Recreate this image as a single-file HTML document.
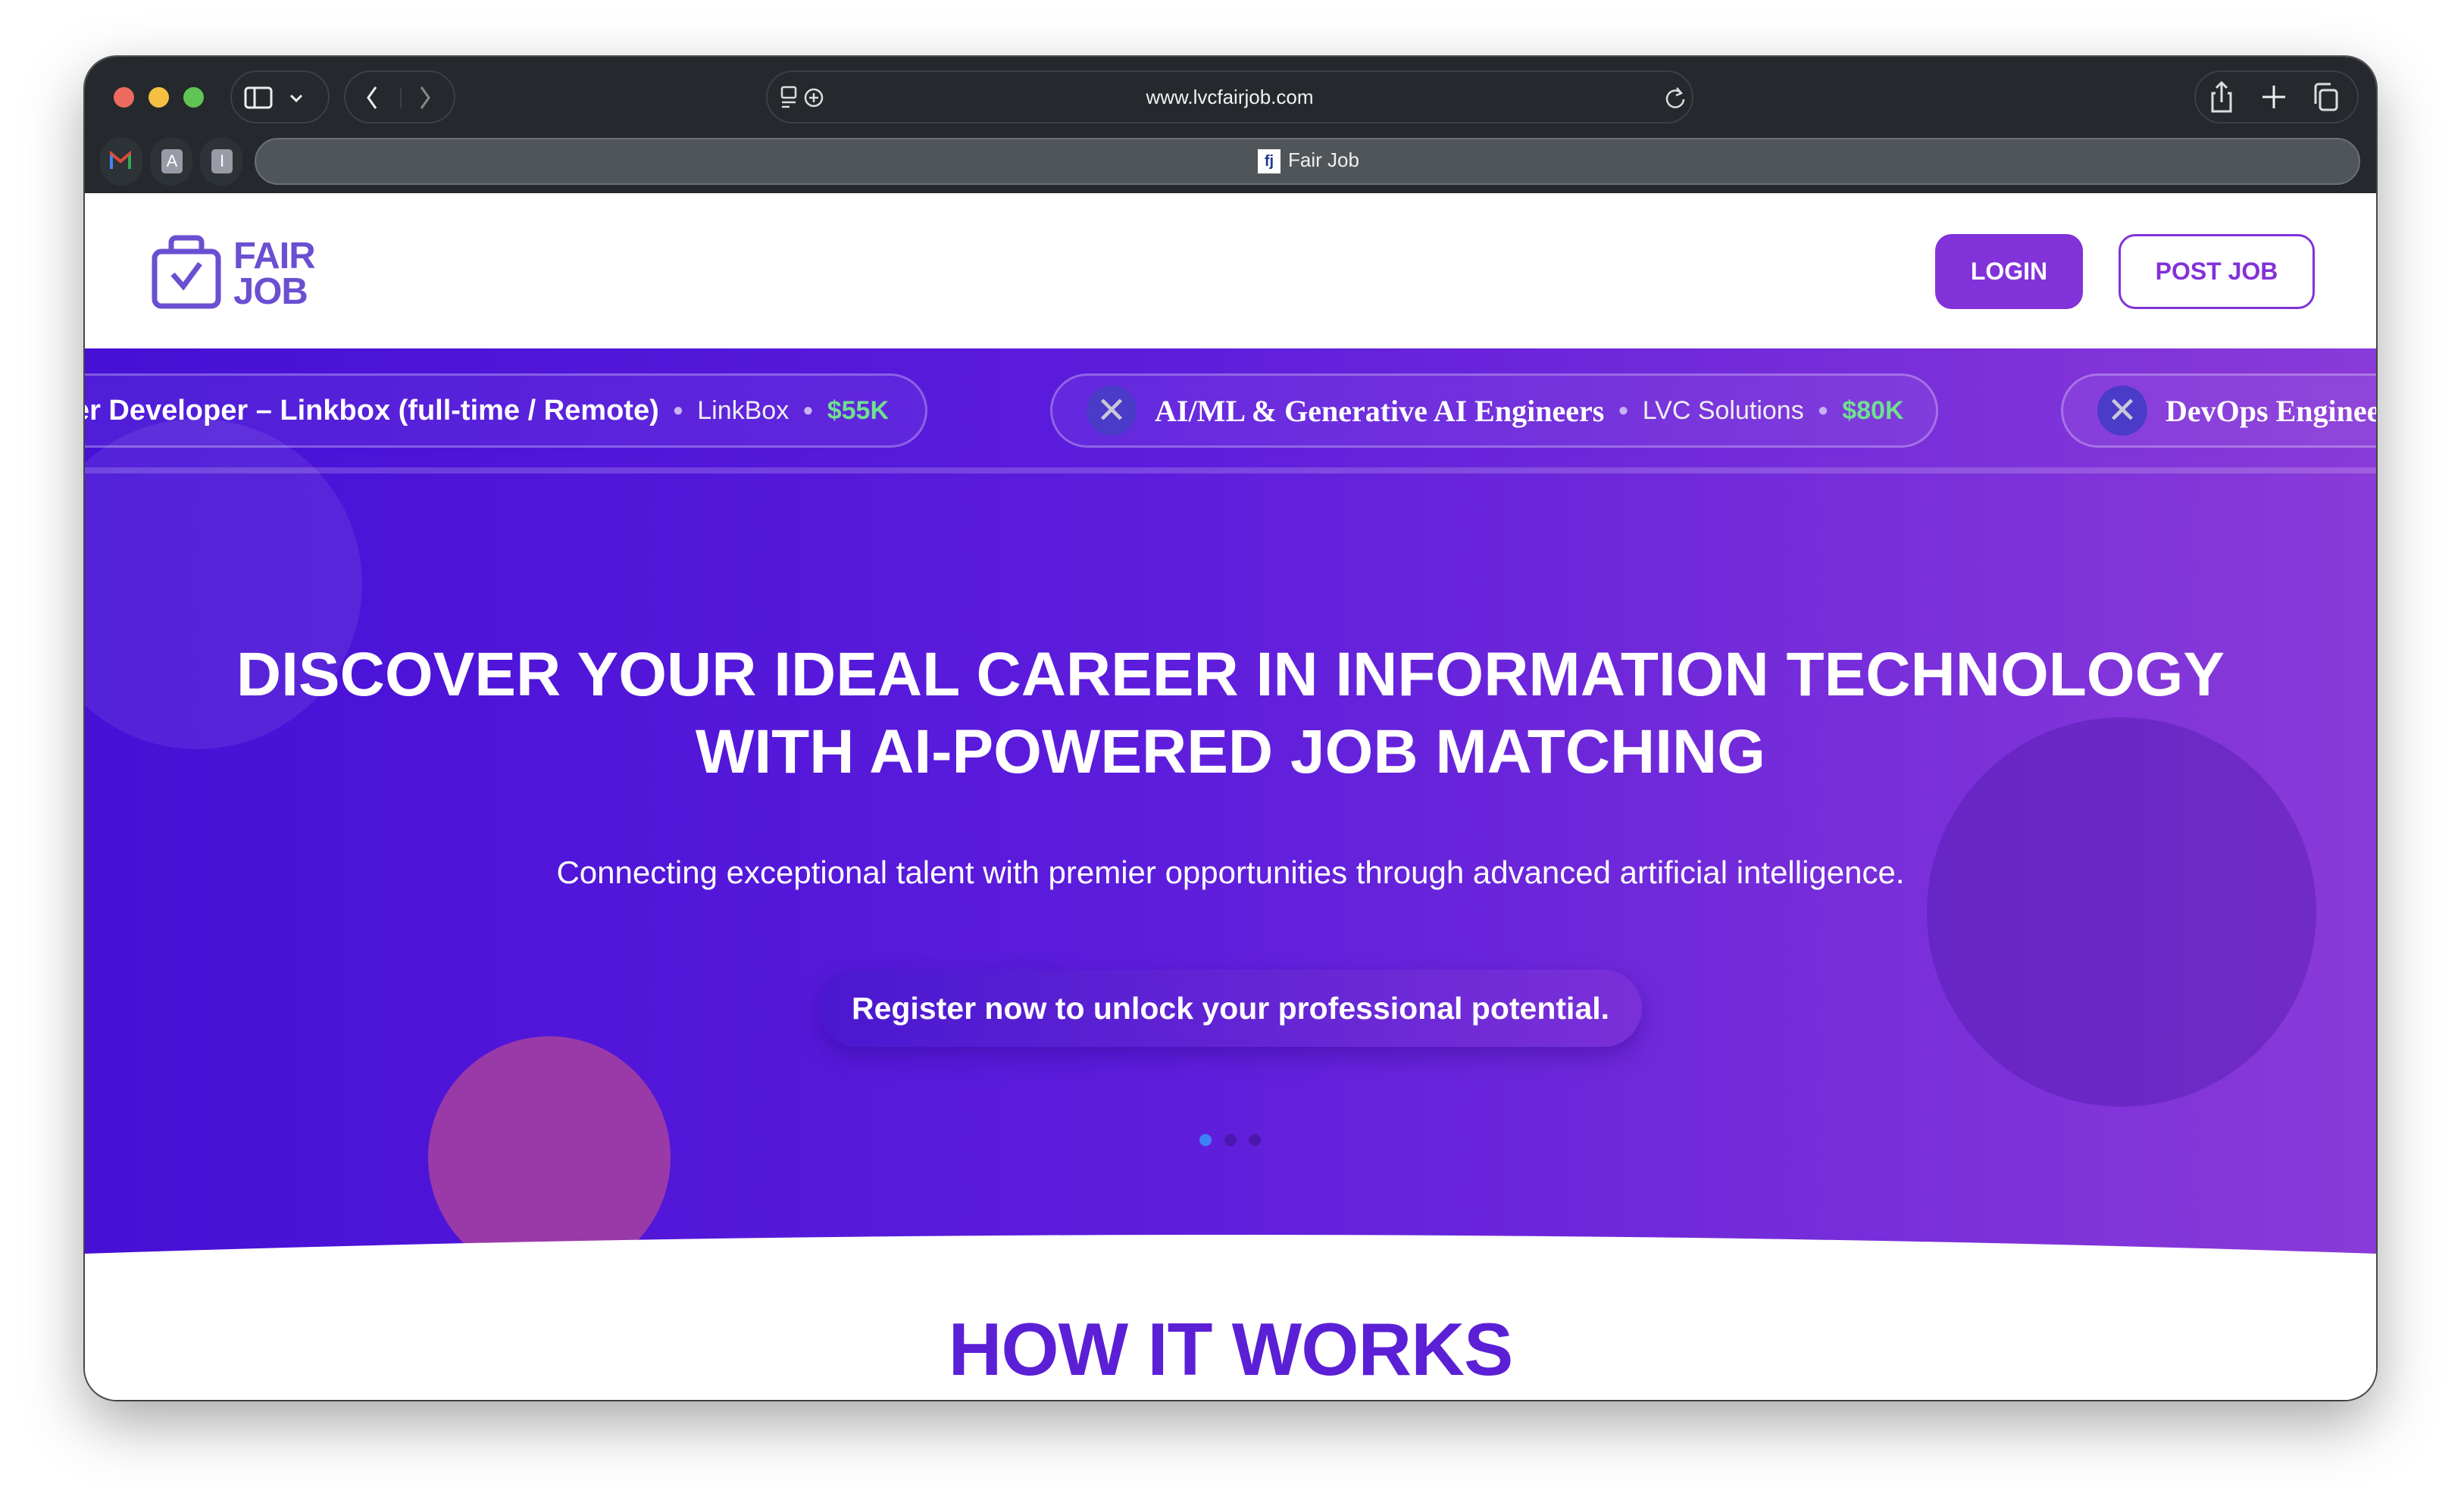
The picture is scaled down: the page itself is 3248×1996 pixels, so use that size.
<!DOCTYPE html>
<html><head><meta charset="utf-8"><style>
*{margin:0;padding:0;box-sizing:border-box}
body{width:3248px;height:1996px;background:#fff;position:relative;overflow:hidden;font-family:"Liberation Sans",sans-serif}
.win{position:absolute;left:112px;top:75px;width:3024px;height:1773px;border-radius:42px;overflow:hidden;background:#fff;box-shadow:0 30px 80px rgba(0,0,0,.35),0 0 0 2px #555}
.tb{position:absolute;left:0;top:0;width:100%;height:180px;background:#25292d}
.abs{position:absolute}
.grp{position:absolute;border:2px solid #3a4146;border-radius:36px;height:70px;top:18px}
.dot{position:absolute;width:27px;height:27px;border-radius:50%;top:40px}
.hero{position:absolute;left:0;top:385px;width:100%;height:1300px;background:linear-gradient(90deg,#4610d6 0%,#5c1cdc 45%,#8a3ad8 100%);overflow:hidden}
.pill{position:absolute;top:33px;height:98px;border:3px solid rgba(255,255,255,.28);border-radius:50px;background:rgba(255,255,255,.06);color:#fff;font-size:34px;display:flex;align-items:center;white-space:nowrap}
.x{width:66px;height:66px;border-radius:50%;background:#4a3bc8;color:#c8c8d8;font-size:48px;display:flex;align-items:center;justify-content:center;margin:0 24px 0 45px;flex:none}
.sep{color:#c6b3f3;margin:0 18px;font-size:24px}
.g{color:#6fe08f;font-weight:bold}
.co{color:#eee}
.serif{font-family:"Liberation Serif",serif;font-weight:bold;font-size:40px}
</style></head><body>
<div class="win">
 <div class="tb">
  <div class="dot" style="left:38px;background:#ee6a5f"></div>
  <div class="dot" style="left:84px;background:#f5c042"></div>
  <div class="dot" style="left:130px;background:#61c554"></div>
  <div class="grp" style="left:192px;width:131px"></div>
  <svg class="abs" style="left:210px;top:38px" width="90" height="32" viewBox="0 0 90 32"><rect x="2" y="3" width="34" height="26" rx="4" fill="none" stroke="#eee" stroke-width="3"/><line x1="14" y1="3" x2="14" y2="29" stroke="#eee" stroke-width="3"/><path d="M62 13l7 7 7-7" fill="none" stroke="#eee" stroke-width="3"/></svg>
  <div class="grp" style="left:342px;width:147px"></div>
  <svg class="abs" style="left:362px;top:36px" width="110" height="36"><path d="M22 4L12 18l10 14" fill="none" stroke="#eee" stroke-width="3"/><line x1="55" y1="6" x2="55" y2="32" stroke="#3a4146" stroke-width="2"/><path d="M82 4l10 14-10 14" fill="none" stroke="#888" stroke-width="3"/></svg>
  <div class="grp" style="left:899px;width:1224px"></div>
  <svg class="abs" style="left:918px;top:38px" width="60" height="32"><rect x="2" y="2" width="18" height="14" rx="2" fill="none" stroke="#ddd" stroke-width="2.5"/><line x1="2" y1="22" x2="20" y2="22" stroke="#ddd" stroke-width="2.5"/><line x1="2" y1="28" x2="12" y2="28" stroke="#ddd" stroke-width="2.5"/><circle cx="44" cy="16" r="11" fill="none" stroke="#ddd" stroke-width="2.5"/><path d="M44 10v12M38 16h12" stroke="#ddd" stroke-width="2.5"/></svg>
  <div class="abs" style="left:899px;width:1224px;top:38px;text-align:center;color:#f2f2f2;font-size:26px">www.lvcfairjob.com</div>
  <svg class="abs" style="left:2085px;top:38px" width="30" height="32"><path d="M22 10a11 11 0 1 0 3 8" fill="none" stroke="#ddd" stroke-width="2.5"/><path d="M16 3l6 7-7 3" fill="none" stroke="#ddd" stroke-width="2.5"/></svg>
  <div class="grp" style="left:2784px;width:217px"></div>
  <svg class="abs" style="left:2802px;top:30px" width="180" height="50"><path d="M10 18h-4v24h24v-24h-4M18 4v26M11 11l7-7 7 7" fill="none" stroke="#ddd" stroke-width="3"/><path d="M87 8v30M72 23h30" stroke="#eee" stroke-width="3"/><rect x="148" y="14" width="22" height="26" rx="4" fill="none" stroke="#ddd" stroke-width="3"/><path d="M142 32V10a4 4 0 0 1 4-4h16" fill="none" stroke="#ddd" stroke-width="3"/></svg>
  <div class="abs" style="left:20px;top:106px;width:56px;height:64px;border-radius:28px;background:#2d3236"></div>
  <div class="abs" style="left:86px;top:106px;width:56px;height:64px;border-radius:28px;background:#2d3236"></div>
  <div class="abs" style="left:152px;top:106px;width:56px;height:64px;border-radius:28px;background:#2d3236"></div>
  <svg class="abs" style="left:32px;top:124px" width="30" height="26"><path d="M3 24V4l12 10L27 4v20" fill="none" stroke="#e04a3a" stroke-width="4"/><path d="M3 24V6" stroke="#4285f4" stroke-width="4"/><path d="M27 24V6" stroke="#34a853" stroke-width="4"/></svg>
  <div class="abs" style="left:101px;top:122px;width:28px;height:32px;border-radius:5px;background:#9a9aa6;color:#fff;font-size:22px;text-align:center;line-height:32px">A</div>
  <div class="abs" style="left:167px;top:122px;width:28px;height:32px;border-radius:5px;background:#9a9aa6;color:#fff;font-size:22px;text-align:center;line-height:32px">I</div>
  <div class="abs" style="left:224px;top:107px;width:2779px;height:62px;border-radius:31px;background:#50555a;border:2px solid #6a7075"></div>
  <div class="abs" style="left:1548px;top:122px;width:30px;height:32px;background:#fff;color:#1e3a8a;font-size:20px;font-weight:bold;text-align:center;line-height:32px">fj</div>
  <div class="abs" style="left:1588px;top:121px;color:#eee;font-size:26px">Fair Job</div>
 </div>
 <svg class="abs" style="left:88px;top:235px" width="94" height="100" viewBox="0 0 94 100"><rect x="4" y="22" width="84" height="72" rx="9" fill="none" stroke="#6a4fd1" stroke-width="7"/><path d="M26 22V10a6 6 0 0 1 6-6h28a6 6 0 0 1 6 6v12" fill="none" stroke="#6a4fd1" stroke-width="7"/><path d="M28 52l14 16 22-30" fill="none" stroke="#6a4fd1" stroke-width="7"/></svg>
 <div class="abs" style="left:196px;top:240px;color:#6a4fd1;font-weight:bold;font-size:49px;line-height:47px;letter-spacing:-1px">FAIR<br>JOB</div>
 <div class="abs" style="left:2442px;top:234px;width:195px;height:99px;border-radius:22px;background:#8232d9;color:#fff;font-weight:bold;font-size:32px;text-align:center;line-height:99px">LOGIN</div>
 <div class="abs" style="left:2684px;top:234px;width:259px;height:99px;border-radius:22px;border:3px solid #8232d9;color:#8232d9;font-weight:bold;font-size:32px;text-align:center;line-height:93px">POST JOB</div>
 <div class="hero">
  <div class="abs" style="left:-70px;top:93px;width:436px;height:436px;border-radius:50%;background:rgba(255,255,255,.08)"></div>
  <div class="abs" style="left:2431px;top:487px;width:514px;height:514px;border-radius:50%;background:rgba(70,20,160,.35)"></div>
  <div class="abs" style="left:453px;top:908px;width:320px;height:320px;border-radius:50%;background:#9a3aa8"></div>
  <div class="pill" style="left:-260px;width:1372px;justify-content:flex-end;padding-right:48px"><b style="font-size:38px">Full Stack Master Developer – Linkbox (full-time / Remote)</b><span class="sep">●</span><span class="co">LinkBox</span><span class="sep">●</span><span class="g">$55K</span></div>
  <div class="pill" style="left:1274px;width:1172px"><div class="x">✕</div><span class="serif">AI/ML &amp; Generative AI Engineers</span><span class="sep">●</span><span class="co">LVC Solutions</span><span class="sep">●</span><span class="g">$80K</span></div>
  <div class="pill" style="left:2608px;width:800px"><div class="x">✕</div><span class="serif">DevOps Engineer</span></div>
  <div class="abs" style="left:0;top:157px;width:100%;height:8px;background:rgba(255,255,255,.18)"></div>
  <div class="abs" style="left:0;top:380px;width:100%;text-align:center;color:#fff;font-weight:bold;font-size:82px;line-height:102px">DISCOVER YOUR IDEAL CAREER IN INFORMATION TECHNOLOGY<br>WITH AI-POWERED JOB MATCHING</div>
  <div class="abs" style="left:0;top:668px;width:100%;text-align:center;color:#fff;font-size:42px">Connecting exceptional talent with premier opportunities through advanced artificial intelligence.</div>
  <div class="abs" style="left:969px;top:820px;width:1086px;height:102px;border-radius:51px;background:linear-gradient(90deg,#4a18d0,#7a30d8);box-shadow:0 12px 30px rgba(40,0,120,.35);color:#fff;font-weight:bold;font-size:41px;text-align:center;line-height:102px">Register now to unlock your professional potential.</div>
  <div class="abs" style="left:1471px;top:1037px;width:16px;height:16px;border-radius:50%;background:#3b82f6"></div>
  <div class="abs" style="left:1504px;top:1037px;width:16px;height:16px;border-radius:50%;background:rgba(60,20,140,.6)"></div>
  <div class="abs" style="left:1536px;top:1037px;width:16px;height:16px;border-radius:50%;background:rgba(60,20,140,.6)"></div>
 </div>
 <svg class="abs" style="left:0;top:1460px" width="3024" height="160" viewBox="0 0 3024 160" preserveAspectRatio="none"><path d="M0 120Q1512 70 3024 120V160H0Z" fill="#fff"/></svg>
 <div class="abs" style="left:0;top:1620px;width:100%;height:200px;background:#fff"></div>
 <div class="abs" style="left:0;top:1650px;width:100%;text-align:center;color:#5b1fd6;font-weight:bold;font-size:98px;letter-spacing:-1px">HOW IT WORKS</div>
</div>
</body></html>
